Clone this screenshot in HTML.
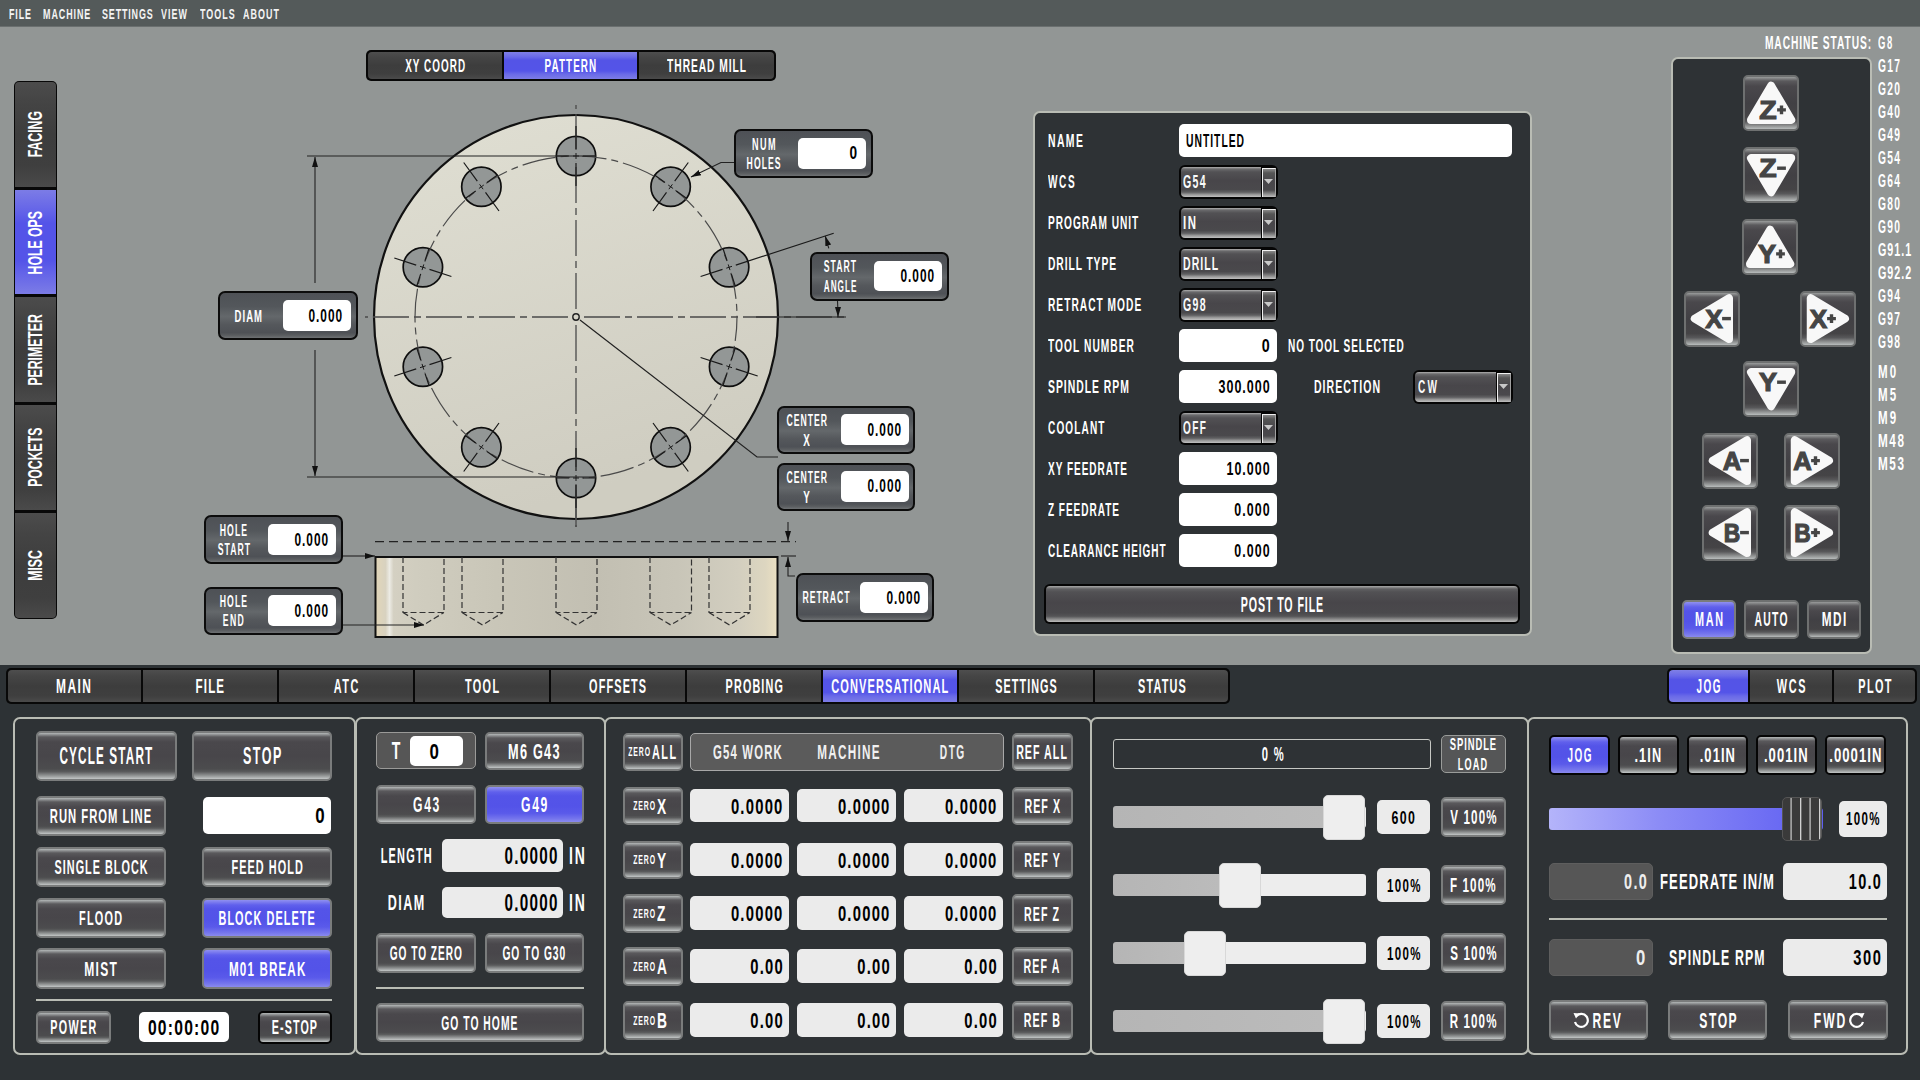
<!DOCTYPE html><html><head><meta charset="utf-8"><style>
*{margin:0;padding:0;box-sizing:border-box}
html,body{width:1920px;height:1080px;overflow:hidden}
body{background:#929695;position:relative;font-family:"Liberation Sans",sans-serif;font-weight:bold}
div{position:absolute}
.tx{white-space:nowrap;line-height:1;height:1em}
.tx span{display:inline-block;-webkit-text-stroke:0px currentColor}
.menu{left:0;top:0;width:1920px;height:27px;background:#545a5a;border-bottom:1px solid #6a6f6f}
.btn{border:2px solid #7a7c7c;border-radius:5px;background:linear-gradient(#b4b8b8 0px,#5a595c 4px,#4a484c 9px,#48464a 50%,#4c4c4e 78%,#5a5b5c 84%,#9a9d9d 94%,#c2c6c6 100%)}
.btnb{border:2px solid #7a7c7c;border-radius:5px;background:linear-gradient(#9090f0 0px,#6060ec 5px,#5454e8 9px,#5353e8 55%,#5a5aea 75%,#7474ec 90%,#8a8aee 100%)}
.tabd{background:linear-gradient(#4e4e4e 0%,#454545 20%,#3d3d3d 50%,#3f3f3f 80%,#4a4a4a 100%)}
.tabb{background:linear-gradient(#8080e6 0%,#6a6ae8 18%,#5454e6 30%,#5454e8 70%,#6a6ae8 82%,#7c7ce6 100%)}
.tabdv{background:linear-gradient(90deg,#4e4e4e 0%,#454545 20%,#3d3d3d 50%,#3f3f3f 80%,#4a4a4a 100%)}
.tabbv{background:linear-gradient(90deg,#8080e6 0%,#6a6ae8 18%,#5454e6 30%,#5454e8 70%,#6a6ae8 82%,#7c7ce6 100%)}
.dim{border:2px solid #0c0c0c;border-radius:7px;background:linear-gradient(#4e5156 0%,#53575b 30%,#64686b 52%,#55585c 70%,#4e5156 88%,#5a5d60 94%,#6e7173 100%)}
.inp{background:#fff;border-radius:5px}
.inpg{background:#ebebeb;border-radius:5px}
.panel{background:#2e3235;border:2px solid #b9bcb4;border-radius:7px}
.dd{border:2px solid #0a0a0a;border-radius:5px;background:linear-gradient(#7a7a7a 0px,#4a4a4a 5px,#3e3e3e 50%,#454545 80%,#6a6a6a 92%,#a8a8a8 100%)}
.ddb{border-left:1px solid #1a1a1a;background:linear-gradient(90deg,#d0d0d0 0px,#8a8a8a 2px,#4e4e4e 4px,#454545 60%,#8a8a8a 90%,#c8c8c8 100%)}
.jog{border:2px solid #6e7070;border-radius:5px;background:linear-gradient(#9a9c9c 0px,#5b5a5d 4px,#4a484c 9px,#414044 50%,#454446 78%,#58585a 86%,#909292 94%,#b8bcbc 100%)}
</style></head><body><div class="menu"></div>
<div class="tx" style="left:9.1px;top:6.0px;font-size:15.26px;color:#f4f4f4;"><span style="transform:scaleX(0.585);letter-spacing:0.098em;transform-origin:0 50%">FILE</span></div>
<div class="tx" style="left:43.1px;top:6.0px;font-size:15.26px;color:#f4f4f4;"><span style="transform:scaleX(0.585);letter-spacing:0.106em;transform-origin:0 50%">MACHINE</span></div>
<div class="tx" style="left:101.6px;top:6.0px;font-size:15.26px;color:#f4f4f4;"><span style="transform:scaleX(0.585);letter-spacing:0.097em;transform-origin:0 50%">SETTINGS</span></div>
<div class="tx" style="left:161.1px;top:6.0px;font-size:15.26px;color:#f4f4f4;"><span style="transform:scaleX(0.585);letter-spacing:0.116em;transform-origin:0 50%">VIEW</span></div>
<div class="tx" style="left:199.6px;top:6.0px;font-size:15.26px;color:#f4f4f4;"><span style="transform:scaleX(0.585);letter-spacing:0.117em;transform-origin:0 50%">TOOLS</span></div>
<div class="tx" style="left:242.6px;top:6.0px;font-size:15.26px;color:#f4f4f4;"><span style="transform:scaleX(0.585);letter-spacing:0.121em;transform-origin:0 50%">ABOUT</span></div>
<div class="" style="left:14.0px;top:81.0px;width:43.0px;height:538.0px;background:#080808;border-radius:5px"></div>
<div class="tabdv" style="left:15.0px;top:82.0px;width:41.0px;height:105.0px;border-radius:4px 4px 0 0;background-image:linear-gradient(#4c4c4c 0%,#444 20%,#3d3d3d 50%,#3f3f3f 80%,#4a4a4a 100%)"></div>
<div class="tx" style="left:-115px;width:300px;text-align:center;top:124.1px;font-size:20.78px;color:#fff;transform:rotate(-90deg);transform-origin:150px 10.44px"><span style="transform:scaleX(0.59)">FACING</span></div>
<div class="tabbv" style="left:15.0px;top:190.0px;width:41.0px;height:104.0px;background-image:linear-gradient(#7c7ce6 0%,#6464e8 20%,#5454e8 32%,#5454e8 68%,#6464e8 80%,#7c7ce6 100%)"></div>
<div class="tx" style="left:-115px;width:300px;text-align:center;top:231.6px;font-size:20.78px;color:#fff;transform:rotate(-90deg);transform-origin:150px 10.44px"><span style="transform:scaleX(0.59)">HOLE OPS</span></div>
<div class="tabdv" style="left:15.0px;top:297.0px;width:41.0px;height:105.0px;background-image:linear-gradient(#4c4c4c 0%,#444 20%,#3d3d3d 50%,#3f3f3f 80%,#4a4a4a 100%)"></div>
<div class="tx" style="left:-115px;width:300px;text-align:center;top:339.1px;font-size:20.78px;color:#fff;transform:rotate(-90deg);transform-origin:150px 10.44px"><span style="transform:scaleX(0.59)">PERIMETER</span></div>
<div class="tabdv" style="left:15.0px;top:405.0px;width:41.0px;height:105.0px;background-image:linear-gradient(#4c4c4c 0%,#444 20%,#3d3d3d 50%,#3f3f3f 80%,#4a4a4a 100%)"></div>
<div class="tx" style="left:-115px;width:300px;text-align:center;top:447.1px;font-size:20.78px;color:#fff;transform:rotate(-90deg);transform-origin:150px 10.44px"><span style="transform:scaleX(0.59)">POCKETS</span></div>
<div class="tabdv" style="left:15.0px;top:513.0px;width:41.0px;height:105.0px;border-radius:0 0 4px 4px;background-image:linear-gradient(#4c4c4c 0%,#444 20%,#3d3d3d 50%,#3f3f3f 80%,#4a4a4a 100%)"></div>
<div class="tx" style="left:-115px;width:300px;text-align:center;top:555.1px;font-size:20.78px;color:#fff;transform:rotate(-90deg);transform-origin:150px 10.44px"><span style="transform:scaleX(0.59)">MISC</span></div>
<div class="" style="left:366.0px;top:50.0px;width:410.0px;height:31.0px;background:#080808;border-radius:5px"></div>
<div class="tabd" style="left:368.0px;top:52.0px;width:134.0px;height:27.0px;border-radius:4px 0 0 4px;"></div>
<div class="tx" style="left:-65.7px;width:1000px;text-align:center;top:57.0px;font-size:18.75px;color:#fff;"><span style="transform:scaleX(0.528);letter-spacing:0.104em;transform-origin:50% 50%;margin-right:-0.104em">XY COORD</span></div>
<div class="tabb" style="left:504.0px;top:52.0px;width:133.0px;height:27.0px;"></div>
<div class="tx" style="left:69.8px;width:1000px;text-align:center;top:57.0px;font-size:18.75px;color:#fff;"><span style="transform:scaleX(0.528);letter-spacing:0.107em;transform-origin:50% 50%;margin-right:-0.107em">PATTERN</span></div>
<div class="tabd" style="left:639.0px;top:52.0px;width:135.0px;height:27.0px;border-radius:0 4px 4px 0;"></div>
<div class="tx" style="left:205.8px;width:1000px;text-align:center;top:57.0px;font-size:18.75px;color:#fff;"><span style="transform:scaleX(0.547);letter-spacing:0.092em;transform-origin:50% 50%;margin-right:-0.092em">THREAD MILL</span></div>
<svg style="position:absolute;left:0;top:0" width="1920" height="665" viewBox="0 0 1920 665"><defs><linearGradient id="disc" x1="0" y1="0" x2="0.3" y2="1"><stop offset="0" stop-color="#e0dfd3"/><stop offset="1" stop-color="#cfcdc1"/></linearGradient><linearGradient id="side" x1="0" y1="0" x2="1" y2="0"><stop offset="0" stop-color="#e2d6b8"/><stop offset="0.025" stop-color="#d8d2c0"/><stop offset="0.035" stop-color="#ecebe4"/><stop offset="0.045" stop-color="#d4d0c2"/><stop offset="0.1" stop-color="#d0cdbf"/><stop offset="0.3" stop-color="#c9c6b8"/><stop offset="0.55" stop-color="#c2bfb2"/><stop offset="0.75" stop-color="#c8c5b8"/><stop offset="0.9" stop-color="#d2cebf"/><stop offset="0.97" stop-color="#ddd6c0"/><stop offset="1" stop-color="#ebe0c2"/></linearGradient><marker id="ar" viewBox="0 0 10 10" refX="10" refY="5" markerWidth="10" markerHeight="10" markerUnits="userSpaceOnUse" orient="auto"><path d="M0,2 L10,5 L0,8 z" fill="#111"/></marker></defs><circle cx="576" cy="317" r="202" fill="url(#disc)" stroke="#111" stroke-width="2.2"/><circle cx="576.00" cy="156.00" r="19.7" fill="#939796" stroke="#0e0e0e" stroke-width="1.7"/><circle cx="670.63" cy="186.75" r="19.7" fill="#939796" stroke="#0e0e0e" stroke-width="1.7"/><circle cx="729.12" cy="267.25" r="19.7" fill="#939796" stroke="#0e0e0e" stroke-width="1.7"/><circle cx="729.12" cy="366.75" r="19.7" fill="#939796" stroke="#0e0e0e" stroke-width="1.7"/><circle cx="670.63" cy="447.25" r="19.7" fill="#939796" stroke="#0e0e0e" stroke-width="1.7"/><circle cx="576.00" cy="478.00" r="19.7" fill="#939796" stroke="#0e0e0e" stroke-width="1.7"/><circle cx="481.37" cy="447.25" r="19.7" fill="#939796" stroke="#0e0e0e" stroke-width="1.7"/><circle cx="422.88" cy="366.75" r="19.7" fill="#939796" stroke="#0e0e0e" stroke-width="1.7"/><circle cx="422.88" cy="267.25" r="19.7" fill="#939796" stroke="#0e0e0e" stroke-width="1.7"/><circle cx="481.37" cy="186.75" r="19.7" fill="#939796" stroke="#0e0e0e" stroke-width="1.7"/><circle cx="576" cy="317" r="161" fill="none" stroke="#4a4a4a" stroke-width="1.2" stroke-dasharray="34 5 7 5" stroke-dashoffset="10"/><line x1="576.0" y1="309.0" x2="576" y2="105" stroke="#4a4a4a" stroke-width="1.3" stroke-dasharray="36 5 7 5"/><line x1="576.0" y1="325.0" x2="576" y2="527" stroke="#4a4a4a" stroke-width="1.3" stroke-dasharray="36 5 7 5"/><line x1="568.0" y1="317.0" x2="365" y2="317" stroke="#4a4a4a" stroke-width="1.3" stroke-dasharray="36 5 7 5"/><line x1="584.0" y1="317.0" x2="846" y2="317" stroke="#4a4a4a" stroke-width="1.3" stroke-dasharray="36 5 7 5"/><line x1="756" y1="317" x2="846" y2="317" stroke="#222" stroke-width="1.2"/><line x1="576" y1="490" x2="576" y2="527" stroke="#4a4a4a" stroke-width="1.3"/><circle cx="576.00" cy="156.00" r="6" fill="#939796"/><path d="M576.0,149.0 L576.0,126.0 M576.0,163.0 L576.0,186.0" stroke="#1a1a1a" stroke-width="1.2"/><path d="M583.0,156.0 L596.0,156.0 M569.0,156.0 L556.0,156.0" stroke="#1a1a1a" stroke-width="1.2"/><path d="M576.0,159.0 L576.0,153.0 M573.0,156.0 L579.0,156.0" stroke="#1a1a1a" stroke-width="1"/><circle cx="670.63" cy="186.75" r="6" fill="#939796"/><path d="M674.7,181.1 L688.3,162.5 M666.5,192.4 L653.0,211.0" stroke="#1a1a1a" stroke-width="1.2"/><path d="M676.3,190.9 L686.8,198.5 M665.0,182.6 L654.5,175.0" stroke="#1a1a1a" stroke-width="1.2"/><path d="M668.9,189.2 L672.4,184.3 M668.2,185.0 L673.1,188.5" stroke="#1a1a1a" stroke-width="1"/><circle cx="729.12" cy="267.25" r="6" fill="#939796"/><path d="M735.8,265.1 L833.7,233.3 M722.5,269.4 L700.6,276.5" stroke="#1a1a1a" stroke-width="1.2"/><path d="M731.3,273.9 L735.3,286.3 M727.0,260.6 L722.9,248.2" stroke="#1a1a1a" stroke-width="1.2"/><path d="M726.3,268.2 L732.0,266.3 M728.2,264.4 L730.0,270.1" stroke="#1a1a1a" stroke-width="1"/><circle cx="729.12" cy="366.75" r="6" fill="#939796"/><path d="M735.8,368.9 L757.7,376.0 M722.5,364.6 L700.6,357.5" stroke="#1a1a1a" stroke-width="1.2"/><path d="M727.0,373.4 L722.9,385.8 M731.3,360.1 L735.3,347.7" stroke="#1a1a1a" stroke-width="1.2"/><path d="M726.3,365.8 L732.0,367.7 M730.0,363.9 L728.2,369.6" stroke="#1a1a1a" stroke-width="1"/><circle cx="670.63" cy="447.25" r="6" fill="#939796"/><path d="M674.7,452.9 L688.3,471.5 M666.5,441.6 L653.0,423.0" stroke="#1a1a1a" stroke-width="1.2"/><path d="M665.0,451.4 L654.5,459.0 M676.3,443.1 L686.8,435.5" stroke="#1a1a1a" stroke-width="1.2"/><path d="M668.9,444.8 L672.4,449.7 M673.1,445.5 L668.2,449.0" stroke="#1a1a1a" stroke-width="1"/><circle cx="576.00" cy="478.00" r="6" fill="#939796"/><path d="M576.0,485.0 L576.0,508.0 M576.0,471.0 L576.0,448.0" stroke="#1a1a1a" stroke-width="1.2"/><path d="M569.0,478.0 L556.0,478.0 M583.0,478.0 L596.0,478.0" stroke="#1a1a1a" stroke-width="1.2"/><path d="M576.0,475.0 L576.0,481.0 M579.0,478.0 L573.0,478.0" stroke="#1a1a1a" stroke-width="1"/><circle cx="481.37" cy="447.25" r="6" fill="#939796"/><path d="M477.3,452.9 L463.7,471.5 M485.5,441.6 L499.0,423.0" stroke="#1a1a1a" stroke-width="1.2"/><path d="M475.7,443.1 L465.2,435.5 M487.0,451.4 L497.5,459.0" stroke="#1a1a1a" stroke-width="1.2"/><path d="M483.1,444.8 L479.6,449.7 M483.8,449.0 L478.9,445.5" stroke="#1a1a1a" stroke-width="1"/><circle cx="422.88" cy="366.75" r="6" fill="#939796"/><path d="M416.2,368.9 L394.3,376.0 M429.5,364.6 L451.4,357.5" stroke="#1a1a1a" stroke-width="1.2"/><path d="M420.7,360.1 L416.7,347.7 M425.0,373.4 L429.1,385.8" stroke="#1a1a1a" stroke-width="1.2"/><path d="M425.7,365.8 L420.0,367.7 M423.8,369.6 L422.0,363.9" stroke="#1a1a1a" stroke-width="1"/><circle cx="422.88" cy="267.25" r="6" fill="#939796"/><path d="M416.2,265.1 L394.3,258.0 M429.5,269.4 L451.4,276.5" stroke="#1a1a1a" stroke-width="1.2"/><path d="M425.0,260.6 L429.1,248.2 M420.7,273.9 L416.7,286.3" stroke="#1a1a1a" stroke-width="1.2"/><path d="M425.7,268.2 L420.0,266.3 M422.0,270.1 L423.8,264.4" stroke="#1a1a1a" stroke-width="1"/><circle cx="481.37" cy="186.75" r="6" fill="#939796"/><path d="M477.3,181.1 L463.7,162.5 M485.5,192.4 L499.0,211.0" stroke="#1a1a1a" stroke-width="1.2"/><path d="M487.0,182.6 L497.5,175.0 M475.7,190.9 L465.2,198.5" stroke="#1a1a1a" stroke-width="1.2"/><path d="M483.1,189.2 L479.6,184.3 M478.9,188.5 L483.8,185.0" stroke="#1a1a1a" stroke-width="1"/><circle cx="576" cy="317" r="3.2" fill="none" stroke="#222" stroke-width="1.4"/><line x1="307" y1="156" x2="596" y2="156" stroke="#222" stroke-width="1.1"/><line x1="307" y1="477" x2="596" y2="477" stroke="#222" stroke-width="1.1"/><line x1="315" y1="283" x2="315" y2="157" stroke="#222" stroke-width="1.1" marker-end="url(#ar)"/><line x1="315" y1="350" x2="315" y2="476" stroke="#222" stroke-width="1.1" marker-end="url(#ar)"/><polyline points="734,162.5 721,162.5 691,177" fill="none" stroke="#222" stroke-width="1.1" marker-end="url(#ar)"/><path d="M828.8,248.3 A262,262 0 0 0 825.2,236.0" fill="none" stroke="#222" stroke-width="1.1" marker-end="url(#ar)"/><path d="M837.5,301.0 A262,262 0 0 1 838.0,317.0" fill="none" stroke="#222" stroke-width="1.1" marker-end="url(#ar)"/><polyline points="580,320 757,457 778,457" fill="none" stroke="#222" stroke-width="1.2"/><rect x="375.5" y="557" width="402" height="80" fill="url(#side)" stroke="#111" stroke-width="2"/><line x1="375" y1="541.7" x2="796" y2="541.7" stroke="#222" stroke-width="1.3" stroke-dasharray="9 5"/><path d="M403,557 V612.5 H444 V557 M403,612.5 L423.5,625 L444,612.5" fill="none" stroke="#333" stroke-width="1.2" stroke-dasharray="6 3"/><path d="M462,557 V612.5 H503 V557 M462,612.5 L482.5,625 L503,612.5" fill="none" stroke="#333" stroke-width="1.2" stroke-dasharray="6 3"/><path d="M556,557 V612.5 H597 V557 M556,612.5 L576.5,625 L597,612.5" fill="none" stroke="#333" stroke-width="1.2" stroke-dasharray="6 3"/><path d="M650,557 V612.5 H691.5 V557 M650,612.5 L670.75,625 L691.5,612.5" fill="none" stroke="#333" stroke-width="1.2" stroke-dasharray="6 3"/><path d="M709,557 V612.5 H750 V557 M709,612.5 L729.5,625 L750,612.5" fill="none" stroke="#333" stroke-width="1.2" stroke-dasharray="6 3"/><line x1="343" y1="556" x2="375" y2="556" stroke="#222" stroke-width="1.1" marker-end="url(#ar)"/><line x1="343" y1="625" x2="424" y2="625" stroke="#222" stroke-width="1.1" marker-end="url(#ar)"/><line x1="788" y1="522" x2="788" y2="541" stroke="#222" stroke-width="1.1" marker-end="url(#ar)"/><line x1="781" y1="556" x2="796" y2="556" stroke="#222" stroke-width="1.1"/><polyline points="795,576 788,576 788,557" fill="none" stroke="#222" stroke-width="1.1" marker-end="url(#ar)"/></svg>
<div class="dim" style="left:218.0px;top:291.0px;width:139.5px;height:49.0px;"></div>
<div class="inp" style="left:283.0px;top:300.0px;width:68.0px;height:31.0px;"></div>
<div class="tx" style="left:-251.7px;width:1000px;text-align:center;top:308.0px;font-size:16.42px;color:#fff;"><span style="transform:scaleX(0.580);letter-spacing:0.116em;transform-origin:50% 50%;margin-right:-0.116em">DIAM</span></div>
<div class="tx" style="left:-657.9px;width:1000px;text-align:right;top:307.0px;font-size:18.17px;color:#000;"><span style="transform:scaleX(0.653);letter-spacing:0.085em;transform-origin:100% 50%;margin-right:-0.085em">0.000</span></div>
<div class="dim" style="left:733.8px;top:129.0px;width:138.8px;height:49.0px;"></div>
<div class="inp" style="left:798.0px;top:138.0px;width:68.0px;height:31.0px;"></div>
<div class="tx" style="left:263.3px;width:1000px;text-align:center;top:136.0px;font-size:16.42px;color:#fff;"><span style="transform:scaleX(0.554);letter-spacing:0.155em;transform-origin:50% 50%;margin-right:-0.155em">NUM</span></div>
<div class="tx" style="left:263.3px;width:1000px;text-align:center;top:155.0px;font-size:16.42px;color:#fff;"><span style="transform:scaleX(0.528);letter-spacing:0.117em;transform-origin:50% 50%;margin-right:-0.117em">HOLES</span></div>
<div class="tx" style="left:-142.7px;width:1000px;text-align:right;top:144.0px;font-size:18.17px;color:#000;"><span style="transform:scaleX(0.750);letter-spacing:0.000em;transform-origin:100% 50%;margin-right:0.000em">0</span></div>
<div class="dim" style="left:809.5px;top:252.0px;width:139.5px;height:48.5px;"></div>
<div class="inp" style="left:874.0px;top:261.0px;width:68.0px;height:30.0px;"></div>
<div class="tx" style="left:339.3px;width:1000px;text-align:center;top:258.0px;font-size:16.42px;color:#fff;"><span style="transform:scaleX(0.528);letter-spacing:0.114em;transform-origin:50% 50%;margin-right:-0.114em">START</span></div>
<div class="tx" style="left:339.3px;width:1000px;text-align:center;top:278.0px;font-size:16.42px;color:#fff;"><span style="transform:scaleX(0.501);letter-spacing:0.119em;transform-origin:50% 50%;margin-right:-0.119em">ANGLE</span></div>
<div class="tx" style="left:-66.7px;width:1000px;text-align:right;top:267.0px;font-size:18.17px;color:#000;"><span style="transform:scaleX(0.653);letter-spacing:0.085em;transform-origin:100% 50%;margin-right:-0.085em">0.000</span></div>
<div class="dim" style="left:776.7px;top:406.0px;width:138.8px;height:47.8px;"></div>
<div class="inp" style="left:841.0px;top:414.4px;width:68.0px;height:30.6px;"></div>
<div class="tx" style="left:306.0px;width:1000px;text-align:center;top:412.0px;font-size:16.42px;color:#fff;"><span style="transform:scaleX(0.528);letter-spacing:0.112em;transform-origin:50% 50%;margin-right:-0.112em">CENTER</span></div>
<div class="tx" style="left:306.0px;width:1000px;text-align:center;top:432.0px;font-size:16.42px;color:#fff;"><span style="transform:scaleX(0.600);letter-spacing:0.000em;transform-origin:50% 50%;margin-right:0.000em">X</span></div>
<div class="tx" style="left:-99.7px;width:1000px;text-align:right;top:421.0px;font-size:18.17px;color:#000;"><span style="transform:scaleX(0.653);letter-spacing:0.085em;transform-origin:100% 50%;margin-right:-0.085em">0.000</span></div>
<div class="dim" style="left:776.7px;top:463.0px;width:138.8px;height:48.0px;"></div>
<div class="inp" style="left:841.0px;top:471.0px;width:68.0px;height:30.8px;"></div>
<div class="tx" style="left:306.0px;width:1000px;text-align:center;top:469.0px;font-size:16.42px;color:#fff;"><span style="transform:scaleX(0.528);letter-spacing:0.112em;transform-origin:50% 50%;margin-right:-0.112em">CENTER</span></div>
<div class="tx" style="left:306.0px;width:1000px;text-align:center;top:489.0px;font-size:16.42px;color:#fff;"><span style="transform:scaleX(0.600);letter-spacing:0.000em;transform-origin:50% 50%;margin-right:0.000em">Y</span></div>
<div class="tx" style="left:-99.7px;width:1000px;text-align:right;top:477.0px;font-size:18.17px;color:#000;"><span style="transform:scaleX(0.653);letter-spacing:0.085em;transform-origin:100% 50%;margin-right:-0.085em">0.000</span></div>
<div class="dim" style="left:203.5px;top:515.0px;width:139.2px;height:49.0px;"></div>
<div class="inp" style="left:268.0px;top:524.0px;width:67.8px;height:31.0px;"></div>
<div class="tx" style="left:-266.9px;width:1000px;text-align:center;top:522.0px;font-size:16.42px;color:#fff;"><span style="transform:scaleX(0.528);letter-spacing:0.126em;transform-origin:50% 50%;margin-right:-0.126em">HOLE</span></div>
<div class="tx" style="left:-266.9px;width:1000px;text-align:center;top:541.0px;font-size:16.42px;color:#fff;"><span style="transform:scaleX(0.528);letter-spacing:0.114em;transform-origin:50% 50%;margin-right:-0.114em">START</span></div>
<div class="tx" style="left:-672.7px;width:1000px;text-align:right;top:531.0px;font-size:18.17px;color:#000;"><span style="transform:scaleX(0.653);letter-spacing:0.085em;transform-origin:100% 50%;margin-right:-0.085em">0.000</span></div>
<div class="dim" style="left:203.5px;top:586.5px;width:139.2px;height:48.9px;"></div>
<div class="inp" style="left:268.0px;top:595.0px;width:67.8px;height:31.0px;"></div>
<div class="tx" style="left:-266.9px;width:1000px;text-align:center;top:593.0px;font-size:16.42px;color:#fff;"><span style="transform:scaleX(0.528);letter-spacing:0.126em;transform-origin:50% 50%;margin-right:-0.126em">HOLE</span></div>
<div class="tx" style="left:-266.9px;width:1000px;text-align:center;top:612.0px;font-size:16.42px;color:#fff;"><span style="transform:scaleX(0.528);letter-spacing:0.144em;transform-origin:50% 50%;margin-right:-0.144em">END</span></div>
<div class="tx" style="left:-672.7px;width:1000px;text-align:right;top:602.0px;font-size:18.17px;color:#000;"><span style="transform:scaleX(0.653);letter-spacing:0.085em;transform-origin:100% 50%;margin-right:-0.085em">0.000</span></div>
<div class="dim" style="left:796.0px;top:573.0px;width:138.0px;height:49.0px;"></div>
<div class="inp" style="left:860.0px;top:582.0px;width:68.0px;height:31.0px;"></div>
<div class="tx" style="left:325.3px;width:1000px;text-align:center;top:589.0px;font-size:16.42px;color:#fff;"><span style="transform:scaleX(0.528);letter-spacing:0.109em;transform-origin:50% 50%;margin-right:-0.109em">RETRACT</span></div>
<div class="tx" style="left:-80.7px;width:1000px;text-align:right;top:589.0px;font-size:18.17px;color:#000;"><span style="transform:scaleX(0.653);letter-spacing:0.085em;transform-origin:100% 50%;margin-right:-0.085em">0.000</span></div>
<div class="panel" style="left:1032.5px;top:111.0px;width:499.0px;height:525.0px;border-width:2px"></div>
<div class="tx" style="left:1048.1px;top:131.0px;font-size:19.04px;color:#fff;"><span style="transform:scaleX(0.548);letter-spacing:0.134em;transform-origin:0 50%">NAME</span></div>
<div class="inp" style="left:1179.0px;top:124.3px;width:333.0px;height:32.6px;"></div>
<div class="tx" style="left:1185.6px;top:131.0px;font-size:19.04px;color:#000;"><span style="transform:scaleX(0.543);letter-spacing:0.096em;transform-origin:0 50%">UNTITLED</span></div>
<div class="tx" style="left:1048.1px;top:172.0px;font-size:19.04px;color:#fff;"><span style="transform:scaleX(0.528);letter-spacing:0.159em;transform-origin:0 50%">WCS</span></div>
<div class="" style="left:1178.5px;top:164.6px;width:99.0px;height:34.0px;background:#050505;border-radius:6px"></div>
<div class="" style="left:1180.5px;top:166.6px;width:80.0px;height:30.0px;border-radius:4px 0 0 4px;background:linear-gradient(#b0b0b0 0px,#6a6a6c 2px,#525154 5px,#48464a 45%,#4a494c 75%,#606062 84%,#9a9a9a 92%,#c0c0c0 100%)"></div>
<div class="" style="left:1261.5px;top:167.6px;width:14.0px;height:29.0px;border-left:1px solid #f0f0f0;border-right:1px solid #a0a0a0;border-top:1px solid #f0f0f0;background:linear-gradient(#8a8a8a 0px,#555 4px,#48464a 45%,#4a494c 75%,#909090 90%,#c0c0c0 100%)"></div>
<svg style="position:absolute;left:1264.0px;top:179.1px" width="9" height="5"><path d="M0,0 H9 L4.5,5 z" fill="#c8c8c8"/></svg>
<div class="tx" style="left:1183.1px;top:172.0px;font-size:19.04px;color:#fafafa;"><span style="transform:scaleX(0.555);letter-spacing:0.129em;transform-origin:0 50%">G54</span></div>
<div class="tx" style="left:1048.1px;top:213.0px;font-size:19.04px;color:#fff;"><span style="transform:scaleX(0.533);letter-spacing:0.097em;transform-origin:0 50%">PROGRAM UNIT</span></div>
<div class="" style="left:1178.5px;top:205.6px;width:99.0px;height:34.0px;background:#050505;border-radius:6px"></div>
<div class="" style="left:1180.5px;top:207.6px;width:80.0px;height:30.0px;border-radius:4px 0 0 4px;background:linear-gradient(#b0b0b0 0px,#6a6a6c 2px,#525154 5px,#48464a 45%,#4a494c 75%,#606062 84%,#9a9a9a 92%,#c0c0c0 100%)"></div>
<div class="" style="left:1261.5px;top:208.6px;width:14.0px;height:29.0px;border-left:1px solid #f0f0f0;border-right:1px solid #a0a0a0;border-top:1px solid #f0f0f0;background:linear-gradient(#8a8a8a 0px,#555 4px,#48464a 45%,#4a494c 75%,#909090 90%,#c0c0c0 100%)"></div>
<svg style="position:absolute;left:1264.0px;top:220.1px" width="9" height="5"><path d="M0,0 H9 L4.5,5 z" fill="#c8c8c8"/></svg>
<div class="tx" style="left:1183.1px;top:213.0px;font-size:19.04px;color:#fafafa;"><span style="transform:scaleX(0.601);letter-spacing:0.136em;transform-origin:0 50%">IN</span></div>
<div class="tx" style="left:1048.1px;top:254.0px;font-size:19.04px;color:#fff;"><span style="transform:scaleX(0.541);letter-spacing:0.088em;transform-origin:0 50%">DRILL TYPE</span></div>
<div class="" style="left:1178.5px;top:246.6px;width:99.0px;height:34.0px;background:#050505;border-radius:6px"></div>
<div class="" style="left:1180.5px;top:248.6px;width:80.0px;height:30.0px;border-radius:4px 0 0 4px;background:linear-gradient(#b0b0b0 0px,#6a6a6c 2px,#525154 5px,#48464a 45%,#4a494c 75%,#606062 84%,#9a9a9a 92%,#c0c0c0 100%)"></div>
<div class="" style="left:1261.5px;top:249.6px;width:14.0px;height:29.0px;border-left:1px solid #f0f0f0;border-right:1px solid #a0a0a0;border-top:1px solid #f0f0f0;background:linear-gradient(#8a8a8a 0px,#555 4px,#48464a 45%,#4a494c 75%,#909090 90%,#c0c0c0 100%)"></div>
<svg style="position:absolute;left:1264.0px;top:261.1px" width="9" height="5"><path d="M0,0 H9 L4.5,5 z" fill="#c8c8c8"/></svg>
<div class="tx" style="left:1183.1px;top:254.0px;font-size:19.04px;color:#fafafa;"><span style="transform:scaleX(0.553);letter-spacing:0.100em;transform-origin:0 50%">DRILL</span></div>
<div class="tx" style="left:1048.1px;top:295.0px;font-size:19.04px;color:#fff;"><span style="transform:scaleX(0.535);letter-spacing:0.100em;transform-origin:0 50%">RETRACT MODE</span></div>
<div class="" style="left:1178.5px;top:287.6px;width:99.0px;height:34.0px;background:#050505;border-radius:6px"></div>
<div class="" style="left:1180.5px;top:289.6px;width:80.0px;height:30.0px;border-radius:4px 0 0 4px;background:linear-gradient(#b0b0b0 0px,#6a6a6c 2px,#525154 5px,#48464a 45%,#4a494c 75%,#606062 84%,#9a9a9a 92%,#c0c0c0 100%)"></div>
<div class="" style="left:1261.5px;top:290.6px;width:14.0px;height:29.0px;border-left:1px solid #f0f0f0;border-right:1px solid #a0a0a0;border-top:1px solid #f0f0f0;background:linear-gradient(#8a8a8a 0px,#555 4px,#48464a 45%,#4a494c 75%,#909090 90%,#c0c0c0 100%)"></div>
<svg style="position:absolute;left:1264.0px;top:302.1px" width="9" height="5"><path d="M0,0 H9 L4.5,5 z" fill="#c8c8c8"/></svg>
<div class="tx" style="left:1183.1px;top:295.0px;font-size:19.04px;color:#fafafa;"><span style="transform:scaleX(0.555);letter-spacing:0.129em;transform-origin:0 50%">G98</span></div>
<div class="tx" style="left:1048.1px;top:336.0px;font-size:19.04px;color:#fff;"><span style="transform:scaleX(0.536);letter-spacing:0.102em;transform-origin:0 50%">TOOL NUMBER</span></div>
<div class="inp" style="left:1179.0px;top:329.3px;width:98.0px;height:32.6px;"></div>
<div class="tx" style="left:269.3px;width:1000px;text-align:right;top:336.0px;font-size:19.04px;color:#000;"><span style="transform:scaleX(0.750);letter-spacing:0.000em;transform-origin:100% 50%;margin-right:0.000em">0</span></div>
<div class="tx" style="left:1048.1px;top:377.0px;font-size:19.04px;color:#fff;"><span style="transform:scaleX(0.547);letter-spacing:0.093em;transform-origin:0 50%">SPINDLE RPM</span></div>
<div class="inp" style="left:1179.0px;top:370.3px;width:98.0px;height:32.6px;"></div>
<div class="tx" style="left:269.3px;width:1000px;text-align:right;top:377.0px;font-size:19.04px;color:#000;"><span style="transform:scaleX(0.655);letter-spacing:0.082em;transform-origin:100% 50%;margin-right:-0.082em">300.000</span></div>
<div class="tx" style="left:1048.1px;top:418.0px;font-size:19.04px;color:#fff;"><span style="transform:scaleX(0.528);letter-spacing:0.112em;transform-origin:0 50%">COOLANT</span></div>
<div class="" style="left:1178.5px;top:410.6px;width:99.0px;height:34.0px;background:#050505;border-radius:6px"></div>
<div class="" style="left:1180.5px;top:412.6px;width:80.0px;height:30.0px;border-radius:4px 0 0 4px;background:linear-gradient(#b0b0b0 0px,#6a6a6c 2px,#525154 5px,#48464a 45%,#4a494c 75%,#606062 84%,#9a9a9a 92%,#c0c0c0 100%)"></div>
<div class="" style="left:1261.5px;top:413.6px;width:14.0px;height:29.0px;border-left:1px solid #f0f0f0;border-right:1px solid #a0a0a0;border-top:1px solid #f0f0f0;background:linear-gradient(#8a8a8a 0px,#555 4px,#48464a 45%,#4a494c 75%,#909090 90%,#c0c0c0 100%)"></div>
<svg style="position:absolute;left:1264.0px;top:425.1px" width="9" height="5"><path d="M0,0 H9 L4.5,5 z" fill="#c8c8c8"/></svg>
<div class="tx" style="left:1183.1px;top:418.0px;font-size:19.04px;color:#fafafa;"><span style="transform:scaleX(0.528);letter-spacing:0.136em;transform-origin:0 50%">OFF</span></div>
<div class="tx" style="left:1048.1px;top:459.0px;font-size:19.04px;color:#fff;"><span style="transform:scaleX(0.528);letter-spacing:0.095em;transform-origin:0 50%">XY FEEDRATE</span></div>
<div class="inp" style="left:1179.0px;top:452.3px;width:98.0px;height:32.6px;"></div>
<div class="tx" style="left:269.3px;width:1000px;text-align:right;top:459.0px;font-size:19.04px;color:#000;"><span style="transform:scaleX(0.654);letter-spacing:0.083em;transform-origin:100% 50%;margin-right:-0.083em">10.000</span></div>
<div class="tx" style="left:1048.1px;top:500.0px;font-size:19.04px;color:#fff;"><span style="transform:scaleX(0.528);letter-spacing:0.095em;transform-origin:0 50%">Z FEEDRATE</span></div>
<div class="inp" style="left:1179.0px;top:493.3px;width:98.0px;height:32.6px;"></div>
<div class="tx" style="left:269.3px;width:1000px;text-align:right;top:500.0px;font-size:19.04px;color:#000;"><span style="transform:scaleX(0.653);letter-spacing:0.085em;transform-origin:100% 50%;margin-right:-0.085em">0.000</span></div>
<div class="tx" style="left:1048.1px;top:541.0px;font-size:19.04px;color:#fff;"><span style="transform:scaleX(0.526);letter-spacing:0.094em;transform-origin:0 50%">CLEARANCE HEIGHT</span></div>
<div class="inp" style="left:1179.0px;top:534.3px;width:98.0px;height:32.6px;"></div>
<div class="tx" style="left:269.3px;width:1000px;text-align:right;top:541.0px;font-size:19.04px;color:#000;"><span style="transform:scaleX(0.653);letter-spacing:0.085em;transform-origin:100% 50%;margin-right:-0.085em">0.000</span></div>
<div class="tx" style="left:1288.1px;top:336.0px;font-size:19.04px;color:#fff;"><span style="transform:scaleX(0.528);letter-spacing:0.092em;transform-origin:0 50%">NO TOOL SELECTED</span></div>
<div class="tx" style="left:1314.0px;top:377.0px;font-size:19.04px;color:#fff;"><span style="transform:scaleX(0.555);letter-spacing:0.094em;transform-origin:0 50%">DIRECTION</span></div>
<div class="" style="left:1413.0px;top:369.6px;width:99.5px;height:34.0px;background:#050505;border-radius:6px"></div>
<div class="" style="left:1415.0px;top:371.6px;width:80.5px;height:30.0px;border-radius:4px 0 0 4px;background:linear-gradient(#b0b0b0 0px,#6a6a6c 2px,#525154 5px,#48464a 45%,#4a494c 75%,#606062 84%,#9a9a9a 92%,#c0c0c0 100%)"></div>
<div class="" style="left:1496.5px;top:372.6px;width:14.0px;height:29.0px;border-left:1px solid #f0f0f0;border-right:1px solid #a0a0a0;border-top:1px solid #f0f0f0;background:linear-gradient(#8a8a8a 0px,#555 4px,#48464a 45%,#4a494c 75%,#909090 90%,#c0c0c0 100%)"></div>
<svg style="position:absolute;left:1499.0px;top:384.1px" width="9" height="5"><path d="M0,0 H9 L4.5,5 z" fill="#c8c8c8"/></svg>
<div class="tx" style="left:1417.6px;top:377.0px;font-size:19.04px;color:#fafafa;"><span style="transform:scaleX(0.528);letter-spacing:0.227em;transform-origin:0 50%">CW</span></div>
<div class="" style="left:1044.0px;top:583.5px;width:476.0px;height:40.5px;background:#050505;border-radius:6px"></div>
<div class="" style="left:1046.0px;top:585.5px;width:472.0px;height:36.5px;border-radius:4px;background:linear-gradient(#a8a8a8 0px,#606062 3px,#525154 6px,#48464a 45%,#4a494c 75%,#555557 84%,#8a8a8a 92%,#bcbcbc 100%)"></div>
<div class="tx" style="left:781.3px;width:1000px;text-align:center;top:594.0px;font-size:21.80px;color:#fff;"><span style="transform:scaleX(0.488);letter-spacing:0.085em;transform-origin:50% 50%;margin-right:-0.085em">POST TO FILE</span></div>
<div class="tx" style="left:870.1px;width:1000px;text-align:right;top:34.0px;font-size:18.53px;color:#fff;"><span style="transform:scaleX(0.552);letter-spacing:0.090em;transform-origin:100% 50%;margin-right:-0.090em">MACHINE STATUS:</span></div>
<div class="tx" style="left:1878.1px;top:34.0px;font-size:18.53px;color:#fff;"><span style="transform:scaleX(0.511);letter-spacing:0.182em;transform-origin:0 50%">G8</span></div>
<div class="tx" style="left:1878.1px;top:57.0px;font-size:18.53px;color:#fff;"><span style="transform:scaleX(0.555);letter-spacing:0.129em;transform-origin:0 50%">G17</span></div>
<div class="tx" style="left:1878.1px;top:80.0px;font-size:18.53px;color:#fff;"><span style="transform:scaleX(0.555);letter-spacing:0.129em;transform-origin:0 50%">G20</span></div>
<div class="tx" style="left:1878.1px;top:103.0px;font-size:18.53px;color:#fff;"><span style="transform:scaleX(0.555);letter-spacing:0.129em;transform-origin:0 50%">G40</span></div>
<div class="tx" style="left:1878.1px;top:126.0px;font-size:18.53px;color:#fff;"><span style="transform:scaleX(0.555);letter-spacing:0.129em;transform-origin:0 50%">G49</span></div>
<div class="tx" style="left:1878.1px;top:149.0px;font-size:18.53px;color:#fff;"><span style="transform:scaleX(0.555);letter-spacing:0.129em;transform-origin:0 50%">G54</span></div>
<div class="tx" style="left:1878.1px;top:172.0px;font-size:18.53px;color:#fff;"><span style="transform:scaleX(0.555);letter-spacing:0.129em;transform-origin:0 50%">G64</span></div>
<div class="tx" style="left:1878.1px;top:195.0px;font-size:18.53px;color:#fff;"><span style="transform:scaleX(0.555);letter-spacing:0.129em;transform-origin:0 50%">G80</span></div>
<div class="tx" style="left:1878.1px;top:218.0px;font-size:18.53px;color:#fff;"><span style="transform:scaleX(0.555);letter-spacing:0.129em;transform-origin:0 50%">G90</span></div>
<div class="tx" style="left:1878.1px;top:241.0px;font-size:18.53px;color:#fff;"><span style="transform:scaleX(0.581);letter-spacing:0.093em;transform-origin:0 50%">G91.1</span></div>
<div class="tx" style="left:1878.1px;top:264.0px;font-size:18.53px;color:#fff;"><span style="transform:scaleX(0.581);letter-spacing:0.093em;transform-origin:0 50%">G92.2</span></div>
<div class="tx" style="left:1878.1px;top:287.0px;font-size:18.53px;color:#fff;"><span style="transform:scaleX(0.555);letter-spacing:0.129em;transform-origin:0 50%">G94</span></div>
<div class="tx" style="left:1878.1px;top:310.0px;font-size:18.53px;color:#fff;"><span style="transform:scaleX(0.555);letter-spacing:0.129em;transform-origin:0 50%">G97</span></div>
<div class="tx" style="left:1878.1px;top:333.0px;font-size:18.53px;color:#fff;"><span style="transform:scaleX(0.555);letter-spacing:0.129em;transform-origin:0 50%">G98</span></div>
<div class="tx" style="left:1878.1px;top:363.0px;font-size:18.53px;color:#fff;"><span style="transform:scaleX(0.623);letter-spacing:0.189em;transform-origin:0 50%">M0</span></div>
<div class="tx" style="left:1878.1px;top:386.0px;font-size:18.53px;color:#fff;"><span style="transform:scaleX(0.623);letter-spacing:0.189em;transform-origin:0 50%">M5</span></div>
<div class="tx" style="left:1878.1px;top:409.0px;font-size:18.53px;color:#fff;"><span style="transform:scaleX(0.623);letter-spacing:0.189em;transform-origin:0 50%">M9</span></div>
<div class="tx" style="left:1878.1px;top:432.0px;font-size:18.53px;color:#fff;"><span style="transform:scaleX(0.634);letter-spacing:0.133em;transform-origin:0 50%">M48</span></div>
<div class="tx" style="left:1878.1px;top:455.0px;font-size:18.53px;color:#fff;"><span style="transform:scaleX(0.634);letter-spacing:0.133em;transform-origin:0 50%">M53</span></div>
<div class="panel" style="left:1671.0px;top:57.0px;width:200.5px;height:597.0px;"></div>
<div class="jog" style="left:1743.0px;top:75.0px;width:56.0px;height:56.0px;"></div>
<svg style="position:absolute;left:1743px;top:75px" width="56" height="56"><polygon points="28.1,10.7 48.2,44.9 8,44.9" fill="#f8f8f8" stroke="#f8f8f8" stroke-width="8" stroke-linejoin="round"/><text x="16.20" y="43.80" textLength="17.4" lengthAdjust="spacingAndGlyphs" font-family="Liberation Sans" font-weight="bold" font-size="25.9" fill="#454545" stroke="#454545" stroke-width="1.2">Z</text><path d="M34.1,34.9h8.8M38.5,30.5v8.8" stroke="#454545" stroke-width="3.4"/></svg>
<div class="jog" style="left:1743.0px;top:147.0px;width:56.0px;height:56.0px;"></div>
<svg style="position:absolute;left:1743px;top:147px" width="56" height="56"><polygon points="8,11.1 48.2,11.1 28.1,45.3" fill="#f8f8f8" stroke="#f8f8f8" stroke-width="8" stroke-linejoin="round"/><text x="16.20" y="30.10" textLength="17.4" lengthAdjust="spacingAndGlyphs" font-family="Liberation Sans" font-weight="bold" font-size="25.9" fill="#454545" stroke="#454545" stroke-width="1.2">Z</text><path d="M34.1,21.2h8.8" stroke="#454545" stroke-width="3.4"/></svg>
<div class="jog" style="left:1742.0px;top:219.0px;width:56.0px;height:56.0px;"></div>
<svg style="position:absolute;left:1742px;top:219px" width="56" height="56"><polygon points="28.1,10.7 48.2,44.9 8,44.9" fill="#f8f8f8" stroke="#f8f8f8" stroke-width="8" stroke-linejoin="round"/><text x="15.90" y="43.80" textLength="18.0" lengthAdjust="spacingAndGlyphs" font-family="Liberation Sans" font-weight="bold" font-size="25.9" fill="#454545" stroke="#454545" stroke-width="1.2">Y</text><path d="M34.1,34.9h8.8M38.5,30.5v8.8" stroke="#454545" stroke-width="3.4"/></svg>
<div class="jog" style="left:1684.0px;top:290.5px;width:56.0px;height:56.0px;"></div>
<svg style="position:absolute;left:1684px;top:290.5px" width="56" height="56"><polygon points="10.75,27.6 45,7.25 45,48" fill="#f8f8f8" stroke="#f8f8f8" stroke-width="8" stroke-linejoin="round"/><text x="21.30" y="36.50" textLength="17.4" lengthAdjust="spacingAndGlyphs" font-family="Liberation Sans" font-weight="bold" font-size="25.9" fill="#454545" stroke="#454545" stroke-width="1.2">X</text><path d="M38.1,27.6h8.8" stroke="#454545" stroke-width="3.4"/></svg>
<div class="jog" style="left:1800.0px;top:290.5px;width:56.0px;height:56.0px;"></div>
<svg style="position:absolute;left:1800px;top:290.5px" width="56" height="56"><polygon points="10.75,7.25 10.75,48 45,27.6" fill="#f8f8f8" stroke="#f8f8f8" stroke-width="8" stroke-linejoin="round"/><text x="9.80" y="36.50" textLength="17.4" lengthAdjust="spacingAndGlyphs" font-family="Liberation Sans" font-weight="bold" font-size="25.9" fill="#454545" stroke="#454545" stroke-width="1.2">X</text><path d="M27.1,27.6h8.8M31.5,23.200000000000003v8.8" stroke="#454545" stroke-width="3.4"/></svg>
<div class="jog" style="left:1742.5px;top:361.0px;width:56.0px;height:56.0px;"></div>
<svg style="position:absolute;left:1742.5px;top:361px" width="56" height="56"><polygon points="8,11.1 48.2,11.1 28.1,45.3" fill="#f8f8f8" stroke="#f8f8f8" stroke-width="8" stroke-linejoin="round"/><text x="15.90" y="30.10" textLength="18.0" lengthAdjust="spacingAndGlyphs" font-family="Liberation Sans" font-weight="bold" font-size="25.9" fill="#454545" stroke="#454545" stroke-width="1.2">Y</text><path d="M34.1,21.2h8.8" stroke="#454545" stroke-width="3.4"/></svg>
<div class="jog" style="left:1702.0px;top:433.0px;width:56.0px;height:56.0px;"></div>
<svg style="position:absolute;left:1702px;top:433px" width="56" height="56"><polygon points="10.75,27.6 45,7.25 45,48" fill="#f8f8f8" stroke="#f8f8f8" stroke-width="8" stroke-linejoin="round"/><text x="20.75" y="36.50" textLength="18.5" lengthAdjust="spacingAndGlyphs" font-family="Liberation Sans" font-weight="bold" font-size="25.9" fill="#454545" stroke="#454545" stroke-width="1.2">A</text><path d="M38.1,27.6h8.8" stroke="#454545" stroke-width="3.4"/></svg>
<div class="jog" style="left:1784.0px;top:433.0px;width:56.0px;height:56.0px;"></div>
<svg style="position:absolute;left:1784px;top:433px" width="56" height="56"><polygon points="10.75,7.25 10.75,48 45,27.6" fill="#f8f8f8" stroke="#f8f8f8" stroke-width="8" stroke-linejoin="round"/><text x="9.25" y="36.50" textLength="18.5" lengthAdjust="spacingAndGlyphs" font-family="Liberation Sans" font-weight="bold" font-size="25.9" fill="#454545" stroke="#454545" stroke-width="1.2">A</text><path d="M27.1,27.6h8.8M31.5,23.200000000000003v8.8" stroke="#454545" stroke-width="3.4"/></svg>
<div class="jog" style="left:1702.0px;top:505.0px;width:56.0px;height:56.0px;"></div>
<svg style="position:absolute;left:1702px;top:505px" width="56" height="56"><polygon points="10.75,27.6 45,7.25 45,48" fill="#f8f8f8" stroke="#f8f8f8" stroke-width="8" stroke-linejoin="round"/><text x="21.75" y="36.50" textLength="16.5" lengthAdjust="spacingAndGlyphs" font-family="Liberation Sans" font-weight="bold" font-size="25.9" fill="#454545" stroke="#454545" stroke-width="1.2">B</text><path d="M38.1,27.6h8.8" stroke="#454545" stroke-width="3.4"/></svg>
<div class="jog" style="left:1784.0px;top:505.0px;width:56.0px;height:56.0px;"></div>
<svg style="position:absolute;left:1784px;top:505px" width="56" height="56"><polygon points="10.75,7.25 10.75,48 45,27.6" fill="#f8f8f8" stroke="#f8f8f8" stroke-width="8" stroke-linejoin="round"/><text x="10.25" y="36.50" textLength="16.5" lengthAdjust="spacingAndGlyphs" font-family="Liberation Sans" font-weight="bold" font-size="25.9" fill="#454545" stroke="#454545" stroke-width="1.2">B</text><path d="M27.1,27.6h8.8M31.5,23.200000000000003v8.8" stroke="#454545" stroke-width="3.4"/></svg>
<div class="btnb" style="left:1682.0px;top:600.0px;width:54.0px;height:38.5px;"></div>
<div class="tx" style="left:1208.3px;width:1000px;text-align:center;top:610.0px;font-size:19.62px;color:#fff;"><span style="transform:scaleX(0.554);letter-spacing:0.155em;transform-origin:50% 50%;margin-right:-0.155em">MAN</span></div>
<div class="jog" style="left:1744.0px;top:600.0px;width:55.0px;height:38.5px;"></div>
<div class="tx" style="left:1270.8px;width:1000px;text-align:center;top:610.0px;font-size:19.62px;color:#fff;"><span style="transform:scaleX(0.528);letter-spacing:0.129em;transform-origin:50% 50%;margin-right:-0.129em">AUTO</span></div>
<div class="jog" style="left:1807.0px;top:600.0px;width:54.0px;height:38.5px;"></div>
<div class="tx" style="left:1333.3px;width:1000px;text-align:center;top:610.0px;font-size:19.62px;color:#fff;"><span style="transform:scaleX(0.600);letter-spacing:0.125em;transform-origin:50% 50%;margin-right:-0.125em">MDI</span></div>
<div class="" style="left:0.0px;top:665.0px;width:1920.0px;height:415.0px;background:#2d3235"></div>
<div class="" style="left:6.0px;top:668.0px;width:1224.0px;height:36.0px;background:#080808;border-radius:5px"></div>
<div class="tabd" style="left:8.0px;top:670.0px;width:133.0px;height:32.0px;border-radius:4px 0 0 4px;"></div>
<div class="tx" style="left:-426.7px;width:1000px;text-align:center;top:676.0px;font-size:20.64px;color:#fff;"><span style="transform:scaleX(0.580);letter-spacing:0.116em;transform-origin:50% 50%;margin-right:-0.116em">MAIN</span></div>
<div class="tabd" style="left:143.0px;top:670.0px;width:134.0px;height:32.0px;"></div>
<div class="tx" style="left:-290.7px;width:1000px;text-align:center;top:676.0px;font-size:20.64px;color:#fff;"><span style="transform:scaleX(0.562);letter-spacing:0.098em;transform-origin:50% 50%;margin-right:-0.098em">FILE</span></div>
<div class="tabd" style="left:279.0px;top:670.0px;width:134.0px;height:32.0px;"></div>
<div class="tx" style="left:-154.7px;width:1000px;text-align:center;top:676.0px;font-size:20.64px;color:#fff;"><span style="transform:scaleX(0.528);letter-spacing:0.140em;transform-origin:50% 50%;margin-right:-0.140em">ATC</span></div>
<div class="tabd" style="left:415.0px;top:670.0px;width:134.0px;height:32.0px;"></div>
<div class="tx" style="left:-18.7px;width:1000px;text-align:center;top:676.0px;font-size:20.64px;color:#fff;"><span style="transform:scaleX(0.528);letter-spacing:0.126em;transform-origin:50% 50%;margin-right:-0.126em">TOOL</span></div>
<div class="tabd" style="left:551.0px;top:670.0px;width:134.0px;height:32.0px;"></div>
<div class="tx" style="left:117.3px;width:1000px;text-align:center;top:676.0px;font-size:20.64px;color:#fff;"><span style="transform:scaleX(0.528);letter-spacing:0.105em;transform-origin:50% 50%;margin-right:-0.105em">OFFSETS</span></div>
<div class="tabd" style="left:687.0px;top:670.0px;width:134.0px;height:32.0px;"></div>
<div class="tx" style="left:253.3px;width:1000px;text-align:center;top:676.0px;font-size:20.64px;color:#fff;"><span style="transform:scaleX(0.523);letter-spacing:0.106em;transform-origin:50% 50%;margin-right:-0.106em">PROBING</span></div>
<div class="tabb" style="left:823.0px;top:670.0px;width:134.0px;height:32.0px;"></div>
<div class="tx" style="left:389.3px;width:1000px;text-align:center;top:676.0px;font-size:20.64px;color:#fff;"><span style="transform:scaleX(0.536);letter-spacing:0.098em;transform-origin:50% 50%;margin-right:-0.098em">CONVERSATIONAL</span></div>
<div class="tabd" style="left:959.0px;top:670.0px;width:134.0px;height:32.0px;"></div>
<div class="tx" style="left:525.3px;width:1000px;text-align:center;top:676.0px;font-size:20.64px;color:#fff;"><span style="transform:scaleX(0.524);letter-spacing:0.097em;transform-origin:50% 50%;margin-right:-0.097em">SETTINGS</span></div>
<div class="tabd" style="left:1095.0px;top:670.0px;width:133.0px;height:32.0px;border-radius:0 4px 4px 0;"></div>
<div class="tx" style="left:661.3px;width:1000px;text-align:center;top:676.0px;font-size:20.64px;color:#fff;"><span style="transform:scaleX(0.528);letter-spacing:0.109em;transform-origin:50% 50%;margin-right:-0.109em">STATUS</span></div>
<div class="" style="left:1667.0px;top:667.5px;width:250.0px;height:36.0px;background:#080808;border-radius:5px"></div>
<div class="tabb" style="left:1669.0px;top:669.5px;width:79.0px;height:32.0px;border-radius:4px 0 0 4px;"></div>
<div class="tx" style="left:1207.8px;width:1000px;text-align:center;top:676.0px;font-size:20.64px;color:#fff;"><span style="transform:scaleX(0.483);letter-spacing:0.144em;transform-origin:50% 50%;margin-right:-0.144em">JOG</span></div>
<div class="tabd" style="left:1750.0px;top:669.5px;width:82.0px;height:32.0px;"></div>
<div class="tx" style="left:1290.3px;width:1000px;text-align:center;top:676.0px;font-size:20.64px;color:#fff;"><span style="transform:scaleX(0.528);letter-spacing:0.159em;transform-origin:50% 50%;margin-right:-0.159em">WCS</span></div>
<div class="tabd" style="left:1834.0px;top:669.5px;width:81.0px;height:32.0px;border-radius:0 4px 4px 0;"></div>
<div class="tx" style="left:1373.8px;width:1000px;text-align:center;top:676.0px;font-size:20.64px;color:#fff;"><span style="transform:scaleX(0.528);letter-spacing:0.121em;transform-origin:50% 50%;margin-right:-0.121em">PLOT</span></div>
<div class="panel" style="left:12.7px;top:716.7px;width:343.8px;height:338.8px;"></div>
<div class="panel" style="left:354.5px;top:716.7px;width:251.5px;height:338.8px;"></div>
<div class="panel" style="left:604.0px;top:716.7px;width:487.5px;height:338.8px;"></div>
<div class="panel" style="left:1089.5px;top:716.7px;width:439.0px;height:338.8px;"></div>
<div class="panel" style="left:1526.5px;top:716.7px;width:381.0px;height:338.8px;"></div>
<div class="btn" style="left:36.0px;top:730.7px;width:140.7px;height:50.3px;"></div>
<div class="tx" style="left:-394.3px;width:1000px;text-align:center;top:745.0px;font-size:23.69px;color:#fff;"><span style="transform:scaleX(0.497);letter-spacing:0.095em;transform-origin:50% 50%;margin-right:-0.095em">CYCLE START</span></div>
<div class="btn" style="left:192.3px;top:730.7px;width:139.4px;height:50.3px;"></div>
<div class="tx" style="left:-238.7px;width:1000px;text-align:center;top:745.0px;font-size:23.69px;color:#fff;"><span style="transform:scaleX(0.528);letter-spacing:0.124em;transform-origin:50% 50%;margin-right:-0.124em">STOP</span></div>
<div class="btn" style="left:36.0px;top:795.7px;width:129.7px;height:40.3px;"></div>
<div class="tx" style="left:-399.9px;width:1000px;text-align:center;top:806.0px;font-size:20.64px;color:#fff;"><span style="transform:scaleX(0.545);letter-spacing:0.090em;transform-origin:50% 50%;margin-right:-0.090em">RUN FROM LINE</span></div>
<div class="inp" style="left:202.7px;top:797.0px;width:128.3px;height:37.0px;"></div>
<div class="tx" style="left:-675.7px;width:1000px;text-align:right;top:805.0px;font-size:22.53px;color:#000;"><span style="transform:scaleX(0.750);letter-spacing:0.000em;transform-origin:100% 50%;margin-right:0.000em">0</span></div>
<div class="btn" style="left:36.0px;top:846.7px;width:129.7px;height:40.3px;"></div>
<div class="tx" style="left:-399.9px;width:1000px;text-align:center;top:857.0px;font-size:20.64px;color:#fff;"><span style="transform:scaleX(0.525);letter-spacing:0.094em;transform-origin:50% 50%;margin-right:-0.094em">SINGLE BLOCK</span></div>
<div class="btn" style="left:202.3px;top:846.7px;width:129.4px;height:40.3px;"></div>
<div class="tx" style="left:-233.7px;width:1000px;text-align:center;top:857.0px;font-size:20.64px;color:#fff;"><span style="transform:scaleX(0.528);letter-spacing:0.098em;transform-origin:50% 50%;margin-right:-0.098em">FEED HOLD</span></div>
<div class="btn" style="left:36.0px;top:897.7px;width:129.7px;height:40.6px;"></div>
<div class="tx" style="left:-399.9px;width:1000px;text-align:center;top:908.0px;font-size:20.64px;color:#fff;"><span style="transform:scaleX(0.528);letter-spacing:0.119em;transform-origin:50% 50%;margin-right:-0.119em">FLOOD</span></div>
<div class="btnb" style="left:202.3px;top:897.7px;width:129.4px;height:40.6px;"></div>
<div class="tx" style="left:-233.7px;width:1000px;text-align:center;top:908.0px;font-size:20.64px;color:#fff;"><span style="transform:scaleX(0.528);letter-spacing:0.096em;transform-origin:50% 50%;margin-right:-0.096em">BLOCK DELETE</span></div>
<div class="btn" style="left:36.0px;top:948.3px;width:129.7px;height:41.0px;"></div>
<div class="tx" style="left:-399.9px;width:1000px;text-align:center;top:959.0px;font-size:20.64px;color:#fff;"><span style="transform:scaleX(0.583);letter-spacing:0.109em;transform-origin:50% 50%;margin-right:-0.109em">MIST</span></div>
<div class="btnb" style="left:202.3px;top:948.3px;width:129.4px;height:41.0px;"></div>
<div class="tx" style="left:-233.7px;width:1000px;text-align:center;top:959.0px;font-size:20.64px;color:#fff;"><span style="transform:scaleX(0.564);letter-spacing:0.098em;transform-origin:50% 50%;margin-right:-0.098em">M01 BREAK</span></div>
<div class="" style="left:36.0px;top:999.0px;width:295.7px;height:2.0px;background:#b9bcb4"></div>
<div class="btn" style="left:36.0px;top:1010.7px;width:74.7px;height:33.3px;"></div>
<div class="tx" style="left:-427.4px;width:1000px;text-align:center;top:1017.0px;font-size:20.35px;color:#fff;"><span style="transform:scaleX(0.528);letter-spacing:0.129em;transform-origin:50% 50%;margin-right:-0.129em">POWER</span></div>
<div class="inp" style="left:139.3px;top:1012.0px;width:89.4px;height:29.7px;"></div>
<div class="tx" style="left:-316.7px;width:1000px;text-align:center;top:1016.0px;font-size:22.97px;color:#000;"><span style="transform:scaleX(0.682);letter-spacing:0.078em;transform-origin:50% 50%;margin-right:-0.078em">00:00:00</span></div>
<div class="btn" style="left:257.7px;top:1010.7px;width:74.0px;height:33.3px;border-color:#050505"></div>
<div class="tx" style="left:-206.0px;width:1000px;text-align:center;top:1017.0px;font-size:20.35px;color:#fff;"><span style="transform:scaleX(0.528);letter-spacing:0.102em;transform-origin:50% 50%;margin-right:-0.102em">E-STOP</span></div>
<div class="" style="left:376.0px;top:732.0px;width:99.7px;height:37.0px;background:#565656;border:1px solid #9a9a98;border-radius:5px"></div>
<div class="tx" style="left:-104.0px;width:1000px;text-align:center;top:740.0px;font-size:23.40px;color:#fff;"><span style="transform:scaleX(0.600);letter-spacing:0.000em;transform-origin:50% 50%;margin-right:0.000em">T</span></div>
<div class="inp" style="left:410.0px;top:736.0px;width:53.0px;height:30.0px;"></div>
<div class="tx" style="left:-66.2px;width:1000px;text-align:center;top:741.0px;font-size:22.53px;color:#000;"><span style="transform:scaleX(0.750);letter-spacing:0.000em;transform-origin:50% 50%;margin-right:0.000em">0</span></div>
<div class="btn" style="left:485.0px;top:732.0px;width:99.0px;height:38.0px;"></div>
<div class="tx" style="left:33.8px;width:1000px;text-align:center;top:741.0px;font-size:21.95px;color:#fff;"><span style="transform:scaleX(0.579);letter-spacing:0.097em;transform-origin:50% 50%;margin-right:-0.097em">M6 G43</span></div>
<div class="btn" style="left:376.0px;top:785.3px;width:99.7px;height:38.7px;"></div>
<div class="tx" style="left:-74.8px;width:1000px;text-align:center;top:794.0px;font-size:21.95px;color:#fff;"><span style="transform:scaleX(0.555);letter-spacing:0.129em;transform-origin:50% 50%;margin-right:-0.129em">G43</span></div>
<div class="btnb" style="left:485.0px;top:785.3px;width:99.0px;height:38.7px;"></div>
<div class="tx" style="left:33.8px;width:1000px;text-align:center;top:794.0px;font-size:21.95px;color:#fff;"><span style="transform:scaleX(0.555);letter-spacing:0.129em;transform-origin:50% 50%;margin-right:-0.129em">G49</span></div>
<div class="tx" style="left:-94.9px;width:1000px;text-align:center;top:845.0px;font-size:21.66px;color:#fff;"><span style="transform:scaleX(0.505);letter-spacing:0.112em;transform-origin:50% 50%;margin-right:-0.112em">LENGTH</span></div>
<div class="inpg" style="left:441.7px;top:839.0px;width:121.0px;height:32.7px;"></div>
<div class="tx" style="left:-443.5px;width:1000px;text-align:right;top:845.0px;font-size:23.26px;color:#000;"><span style="transform:scaleX(0.654);letter-spacing:0.083em;transform-origin:100% 50%;margin-right:-0.083em">0.0000</span></div>
<div class="tx" style="left:568.5px;top:845.0px;font-size:23.26px;color:#fff;"><span style="transform:scaleX(0.601);letter-spacing:0.136em;transform-origin:0 50%">IN</span></div>
<div class="tx" style="left:-94.9px;width:1000px;text-align:center;top:892.0px;font-size:21.66px;color:#fff;"><span style="transform:scaleX(0.580);letter-spacing:0.116em;transform-origin:50% 50%;margin-right:-0.116em">DIAM</span></div>
<div class="inpg" style="left:441.7px;top:886.7px;width:121.0px;height:31.6px;"></div>
<div class="tx" style="left:-443.5px;width:1000px;text-align:right;top:892.0px;font-size:23.26px;color:#000;"><span style="transform:scaleX(0.654);letter-spacing:0.083em;transform-origin:100% 50%;margin-right:-0.083em">0.0000</span></div>
<div class="tx" style="left:568.5px;top:892.0px;font-size:23.26px;color:#fff;"><span style="transform:scaleX(0.601);letter-spacing:0.136em;transform-origin:0 50%">IN</span></div>
<div class="btn" style="left:376.0px;top:933.3px;width:99.7px;height:39.4px;"></div>
<div class="tx" style="left:-74.8px;width:1000px;text-align:center;top:944.0px;font-size:19.77px;color:#fff;"><span style="transform:scaleX(0.513);letter-spacing:0.095em;transform-origin:50% 50%;margin-right:-0.095em">GO TO ZERO</span></div>
<div class="btn" style="left:485.0px;top:933.3px;width:99.0px;height:39.4px;"></div>
<div class="tx" style="left:33.8px;width:1000px;text-align:center;top:944.0px;font-size:19.77px;color:#fff;"><span style="transform:scaleX(0.520);letter-spacing:0.092em;transform-origin:50% 50%;margin-right:-0.092em">GO TO G30</span></div>
<div class="" style="left:376.0px;top:987.0px;width:208.0px;height:2.0px;background:#b9bcb4"></div>
<div class="btn" style="left:376.0px;top:1003.3px;width:208.0px;height:39.0px;"></div>
<div class="tx" style="left:-20.7px;width:1000px;text-align:center;top:1014.0px;font-size:19.77px;color:#fff;"><span style="transform:scaleX(0.522);letter-spacing:0.099em;transform-origin:50% 50%;margin-right:-0.099em">GO TO HOME</span></div>
<div class="btn" style="left:623.4px;top:732.5px;width:59.4px;height:38.5px;"></div>
<div class="tx" style="left:-350.7px;width:1000px;text-align:right;top:745.0px;font-size:13.08px;color:#fff;"><span style="transform:scaleX(0.528);letter-spacing:0.126em;transform-origin:100% 50%;margin-right:-0.126em">ZERO</span></div>
<div class="tx" style="left:651.6px;top:742.0px;font-size:20.64px;color:#fff;"><span style="transform:scaleX(0.528);letter-spacing:0.133em;transform-origin:0 50%">ALL</span></div>
<div class="" style="left:690.4px;top:732.5px;width:313.2px;height:38.5px;background:#5b5b5b;border:1px solid #a8a8a8;border-radius:5px"></div>
<div class="tx" style="left:247.1px;width:1000px;text-align:center;top:741.0px;font-size:21.08px;color:#f0f0f0;"><span style="transform:scaleX(0.538);letter-spacing:0.104em;transform-origin:50% 50%;margin-right:-0.104em">G54 WORK</span></div>
<div class="tx" style="left:348.3px;width:1000px;text-align:center;top:741.0px;font-size:21.08px;color:#f0f0f0;"><span style="transform:scaleX(0.556);letter-spacing:0.106em;transform-origin:50% 50%;margin-right:-0.106em">MACHINE</span></div>
<div class="tx" style="left:451.2px;width:1000px;text-align:center;top:741.0px;font-size:21.08px;color:#f0f0f0;"><span style="transform:scaleX(0.483);letter-spacing:0.144em;transform-origin:50% 50%;margin-right:-0.144em">DTG</span></div>
<div class="btn" style="left:1011.5px;top:732.5px;width:61.2px;height:38.5px;"></div>
<div class="tx" style="left:541.4px;width:1000px;text-align:center;top:742.0px;font-size:20.20px;color:#fff;"><span style="transform:scaleX(0.528);letter-spacing:0.096em;transform-origin:50% 50%;margin-right:-0.096em">REF ALL</span></div>
<div class="btn" style="left:623.4px;top:786.7px;width:59.4px;height:38.5px;"></div>
<div class="tx" style="left:-345.7px;width:1000px;text-align:right;top:799.0px;font-size:13.08px;color:#fff;"><span style="transform:scaleX(0.528);letter-spacing:0.126em;transform-origin:100% 50%;margin-right:-0.126em">ZERO</span></div>
<div class="tx" style="left:656.6px;top:795.0px;font-size:22.97px;color:#fff;"><span style="transform:scaleX(0.600);letter-spacing:0.000em;transform-origin:0 50%">X</span></div>
<div class="inpg" style="left:690.4px;top:788.7px;width:98.9px;height:33.5px;"></div>
<div class="tx" style="left:-218.4px;width:1000px;text-align:right;top:795.0px;font-size:22.67px;color:#000;"><span style="transform:scaleX(0.654);letter-spacing:0.083em;transform-origin:100% 50%;margin-right:-0.083em">0.0000</span></div>
<div class="inpg" style="left:797.4px;top:788.7px;width:99.0px;height:33.5px;"></div>
<div class="tx" style="left:-111.3px;width:1000px;text-align:right;top:795.0px;font-size:22.67px;color:#000;"><span style="transform:scaleX(0.654);letter-spacing:0.083em;transform-origin:100% 50%;margin-right:-0.083em">0.0000</span></div>
<div class="inpg" style="left:904.4px;top:788.7px;width:99.0px;height:33.5px;"></div>
<div class="tx" style="left:-4.3px;width:1000px;text-align:right;top:795.0px;font-size:22.67px;color:#000;"><span style="transform:scaleX(0.654);letter-spacing:0.083em;transform-origin:100% 50%;margin-right:-0.083em">0.0000</span></div>
<div class="btn" style="left:1011.5px;top:786.7px;width:61.2px;height:38.5px;"></div>
<div class="tx" style="left:541.4px;width:1000px;text-align:center;top:796.0px;font-size:20.20px;color:#fff;"><span style="transform:scaleX(0.528);letter-spacing:0.100em;transform-origin:50% 50%;margin-right:-0.100em">REF X</span></div>
<div class="btn" style="left:623.4px;top:840.6px;width:59.4px;height:38.5px;"></div>
<div class="tx" style="left:-345.7px;width:1000px;text-align:right;top:853.0px;font-size:13.08px;color:#fff;"><span style="transform:scaleX(0.528);letter-spacing:0.126em;transform-origin:100% 50%;margin-right:-0.126em">ZERO</span></div>
<div class="tx" style="left:656.6px;top:849.0px;font-size:22.97px;color:#fff;"><span style="transform:scaleX(0.600);letter-spacing:0.000em;transform-origin:0 50%">Y</span></div>
<div class="inpg" style="left:690.4px;top:842.6px;width:98.9px;height:33.5px;"></div>
<div class="tx" style="left:-218.4px;width:1000px;text-align:right;top:849.0px;font-size:22.67px;color:#000;"><span style="transform:scaleX(0.654);letter-spacing:0.083em;transform-origin:100% 50%;margin-right:-0.083em">0.0000</span></div>
<div class="inpg" style="left:797.4px;top:842.6px;width:99.0px;height:33.5px;"></div>
<div class="tx" style="left:-111.3px;width:1000px;text-align:right;top:849.0px;font-size:22.67px;color:#000;"><span style="transform:scaleX(0.654);letter-spacing:0.083em;transform-origin:100% 50%;margin-right:-0.083em">0.0000</span></div>
<div class="inpg" style="left:904.4px;top:842.6px;width:99.0px;height:33.5px;"></div>
<div class="tx" style="left:-4.3px;width:1000px;text-align:right;top:849.0px;font-size:22.67px;color:#000;"><span style="transform:scaleX(0.654);letter-spacing:0.083em;transform-origin:100% 50%;margin-right:-0.083em">0.0000</span></div>
<div class="btn" style="left:1011.5px;top:840.6px;width:61.2px;height:38.5px;"></div>
<div class="tx" style="left:541.4px;width:1000px;text-align:center;top:850.0px;font-size:20.20px;color:#fff;"><span style="transform:scaleX(0.528);letter-spacing:0.100em;transform-origin:50% 50%;margin-right:-0.100em">REF Y</span></div>
<div class="btn" style="left:623.4px;top:894.3px;width:59.4px;height:38.5px;"></div>
<div class="tx" style="left:-345.7px;width:1000px;text-align:right;top:907.0px;font-size:13.08px;color:#fff;"><span style="transform:scaleX(0.528);letter-spacing:0.126em;transform-origin:100% 50%;margin-right:-0.126em">ZERO</span></div>
<div class="tx" style="left:656.6px;top:902.0px;font-size:22.97px;color:#fff;"><span style="transform:scaleX(0.600);letter-spacing:0.000em;transform-origin:0 50%">Z</span></div>
<div class="inpg" style="left:690.4px;top:896.3px;width:98.9px;height:33.5px;"></div>
<div class="tx" style="left:-218.4px;width:1000px;text-align:right;top:902.0px;font-size:22.67px;color:#000;"><span style="transform:scaleX(0.654);letter-spacing:0.083em;transform-origin:100% 50%;margin-right:-0.083em">0.0000</span></div>
<div class="inpg" style="left:797.4px;top:896.3px;width:99.0px;height:33.5px;"></div>
<div class="tx" style="left:-111.3px;width:1000px;text-align:right;top:902.0px;font-size:22.67px;color:#000;"><span style="transform:scaleX(0.654);letter-spacing:0.083em;transform-origin:100% 50%;margin-right:-0.083em">0.0000</span></div>
<div class="inpg" style="left:904.4px;top:896.3px;width:99.0px;height:33.5px;"></div>
<div class="tx" style="left:-4.3px;width:1000px;text-align:right;top:902.0px;font-size:22.67px;color:#000;"><span style="transform:scaleX(0.654);letter-spacing:0.083em;transform-origin:100% 50%;margin-right:-0.083em">0.0000</span></div>
<div class="btn" style="left:1011.5px;top:894.3px;width:61.2px;height:38.5px;"></div>
<div class="tx" style="left:541.4px;width:1000px;text-align:center;top:904.0px;font-size:20.20px;color:#fff;"><span style="transform:scaleX(0.528);letter-spacing:0.098em;transform-origin:50% 50%;margin-right:-0.098em">REF Z</span></div>
<div class="btn" style="left:623.4px;top:947.0px;width:59.4px;height:38.5px;"></div>
<div class="tx" style="left:-345.7px;width:1000px;text-align:right;top:960.0px;font-size:13.08px;color:#fff;"><span style="transform:scaleX(0.528);letter-spacing:0.126em;transform-origin:100% 50%;margin-right:-0.126em">ZERO</span></div>
<div class="tx" style="left:656.6px;top:955.0px;font-size:22.97px;color:#fff;"><span style="transform:scaleX(0.600);letter-spacing:0.000em;transform-origin:0 50%">A</span></div>
<div class="inpg" style="left:690.4px;top:949.0px;width:98.9px;height:33.5px;"></div>
<div class="tx" style="left:-218.4px;width:1000px;text-align:right;top:955.0px;font-size:22.67px;color:#000;"><span style="transform:scaleX(0.651);letter-spacing:0.088em;transform-origin:100% 50%;margin-right:-0.088em">0.00</span></div>
<div class="inpg" style="left:797.4px;top:949.0px;width:99.0px;height:33.5px;"></div>
<div class="tx" style="left:-111.3px;width:1000px;text-align:right;top:955.0px;font-size:22.67px;color:#000;"><span style="transform:scaleX(0.651);letter-spacing:0.088em;transform-origin:100% 50%;margin-right:-0.088em">0.00</span></div>
<div class="inpg" style="left:904.4px;top:949.0px;width:99.0px;height:33.5px;"></div>
<div class="tx" style="left:-4.3px;width:1000px;text-align:right;top:955.0px;font-size:22.67px;color:#000;"><span style="transform:scaleX(0.651);letter-spacing:0.088em;transform-origin:100% 50%;margin-right:-0.088em">0.00</span></div>
<div class="btn" style="left:1011.5px;top:947.0px;width:61.2px;height:38.5px;"></div>
<div class="tx" style="left:541.4px;width:1000px;text-align:center;top:956.0px;font-size:20.20px;color:#fff;"><span style="transform:scaleX(0.528);letter-spacing:0.102em;transform-origin:50% 50%;margin-right:-0.102em">REF A</span></div>
<div class="btn" style="left:623.4px;top:1001.0px;width:59.4px;height:38.5px;"></div>
<div class="tx" style="left:-345.7px;width:1000px;text-align:right;top:1014.0px;font-size:13.08px;color:#fff;"><span style="transform:scaleX(0.528);letter-spacing:0.126em;transform-origin:100% 50%;margin-right:-0.126em">ZERO</span></div>
<div class="tx" style="left:656.6px;top:1009.0px;font-size:22.97px;color:#fff;"><span style="transform:scaleX(0.600);letter-spacing:0.000em;transform-origin:0 50%">B</span></div>
<div class="inpg" style="left:690.4px;top:1003.0px;width:98.9px;height:33.5px;"></div>
<div class="tx" style="left:-218.4px;width:1000px;text-align:right;top:1009.0px;font-size:22.67px;color:#000;"><span style="transform:scaleX(0.651);letter-spacing:0.088em;transform-origin:100% 50%;margin-right:-0.088em">0.00</span></div>
<div class="inpg" style="left:797.4px;top:1003.0px;width:99.0px;height:33.5px;"></div>
<div class="tx" style="left:-111.3px;width:1000px;text-align:right;top:1009.0px;font-size:22.67px;color:#000;"><span style="transform:scaleX(0.651);letter-spacing:0.088em;transform-origin:100% 50%;margin-right:-0.088em">0.00</span></div>
<div class="inpg" style="left:904.4px;top:1003.0px;width:99.0px;height:33.5px;"></div>
<div class="tx" style="left:-4.3px;width:1000px;text-align:right;top:1009.0px;font-size:22.67px;color:#000;"><span style="transform:scaleX(0.651);letter-spacing:0.088em;transform-origin:100% 50%;margin-right:-0.088em">0.00</span></div>
<div class="btn" style="left:1011.5px;top:1001.0px;width:61.2px;height:38.5px;"></div>
<div class="tx" style="left:541.4px;width:1000px;text-align:center;top:1010.0px;font-size:20.20px;color:#fff;"><span style="transform:scaleX(0.528);letter-spacing:0.102em;transform-origin:50% 50%;margin-right:-0.102em">REF B</span></div>
<div class="" style="left:1113.0px;top:739.0px;width:317.7px;height:29.7px;border:1px solid #c6c8c4;border-radius:3px"></div>
<div class="tx" style="left:772.3px;width:1000px;text-align:center;top:745.0px;font-size:19.62px;color:#fff;"><span style="transform:scaleX(0.571);letter-spacing:0.117em;transform-origin:50% 50%;margin-right:-0.117em">0 %</span></div>
<div class="" style="left:1441.0px;top:734.5px;width:64.7px;height:38.9px;background:#555657;border:1px solid #9a9c9a;border-radius:5px"></div>
<div class="tx" style="left:972.3px;width:1000px;text-align:center;top:736.0px;font-size:17.30px;color:#fff;"><span style="transform:scaleX(0.545);letter-spacing:0.098em;transform-origin:50% 50%;margin-right:-0.098em">SPINDLE</span></div>
<div class="tx" style="left:972.3px;width:1000px;text-align:center;top:756.0px;font-size:17.30px;color:#fff;"><span style="transform:scaleX(0.528);letter-spacing:0.129em;transform-origin:50% 50%;margin-right:-0.129em">LOAD</span></div>
<div class="" style="left:1113.0px;top:806.0px;width:252.5px;height:22.0px;border-radius:3px;background:linear-gradient(90deg,#b5b5b5 0px,#bbbbbb 210px,#ededed 210px,#ededed 100%)"></div>
<div class="" style="left:1323.0px;top:794.5px;width:41.6px;height:45.0px;background:#eeeeee;border-radius:5px;border:1px solid #d8d8d8"></div>
<div class="inpg" style="left:1376.8px;top:799.7px;width:53.4px;height:34.6px;"></div>
<div class="tx" style="left:902.8px;width:1000px;text-align:center;top:809.0px;font-size:18.75px;color:#000;"><span style="transform:scaleX(0.660);letter-spacing:0.114em;transform-origin:50% 50%;margin-right:-0.114em">600</span></div>
<div class="btn" style="left:1441.0px;top:797.3px;width:64.7px;height:39.4px;"></div>
<div class="tx" style="left:972.6px;width:1000px;text-align:center;top:808.0px;font-size:19.62px;color:#fff;"><span style="transform:scaleX(0.591);letter-spacing:0.096em;transform-origin:50% 50%;margin-right:-0.096em">V 100%</span></div>
<div class="" style="left:1113.0px;top:874.0px;width:252.5px;height:22.0px;border-radius:3px;background:linear-gradient(90deg,#b5b5b5 0px,#bbbbbb 106.29999999999995px,#ededed 106.29999999999995px,#ededed 100%)"></div>
<div class="" style="left:1219.3px;top:862.5px;width:41.6px;height:45.0px;background:#eeeeee;border-radius:5px;border:1px solid #d8d8d8"></div>
<div class="inpg" style="left:1376.8px;top:867.7px;width:53.4px;height:34.6px;"></div>
<div class="tx" style="left:902.8px;width:1000px;text-align:center;top:877.0px;font-size:18.75px;color:#000;"><span style="transform:scaleX(0.614);letter-spacing:0.116em;transform-origin:50% 50%;margin-right:-0.116em">100%</span></div>
<div class="btn" style="left:1441.0px;top:865.3px;width:64.7px;height:39.4px;"></div>
<div class="tx" style="left:972.6px;width:1000px;text-align:center;top:876.0px;font-size:19.62px;color:#fff;"><span style="transform:scaleX(0.592);letter-spacing:0.094em;transform-origin:50% 50%;margin-right:-0.094em">F 100%</span></div>
<div class="" style="left:1113.0px;top:942.0px;width:252.5px;height:22.0px;border-radius:3px;background:linear-gradient(90deg,#b5b5b5 0px,#bbbbbb 71px,#ededed 71px,#ededed 100%)"></div>
<div class="" style="left:1184.0px;top:930.5px;width:41.6px;height:45.0px;background:#eeeeee;border-radius:5px;border:1px solid #d8d8d8"></div>
<div class="inpg" style="left:1376.8px;top:935.7px;width:53.4px;height:34.6px;"></div>
<div class="tx" style="left:902.8px;width:1000px;text-align:center;top:945.0px;font-size:18.75px;color:#000;"><span style="transform:scaleX(0.614);letter-spacing:0.116em;transform-origin:50% 50%;margin-right:-0.116em">100%</span></div>
<div class="btn" style="left:1441.0px;top:933.3px;width:64.7px;height:39.4px;"></div>
<div class="tx" style="left:972.6px;width:1000px;text-align:center;top:944.0px;font-size:19.62px;color:#fff;"><span style="transform:scaleX(0.591);letter-spacing:0.096em;transform-origin:50% 50%;margin-right:-0.096em">S 100%</span></div>
<div class="" style="left:1113.0px;top:1010.0px;width:252.5px;height:22.0px;border-radius:3px;background:linear-gradient(90deg,#b5b5b5 0px,#bbbbbb 210px,#ededed 210px,#ededed 100%)"></div>
<div class="" style="left:1323.0px;top:998.5px;width:41.6px;height:45.0px;background:#eeeeee;border-radius:5px;border:1px solid #d8d8d8"></div>
<div class="inpg" style="left:1376.8px;top:1003.7px;width:53.4px;height:34.6px;"></div>
<div class="tx" style="left:902.8px;width:1000px;text-align:center;top:1013.0px;font-size:18.75px;color:#000;"><span style="transform:scaleX(0.614);letter-spacing:0.116em;transform-origin:50% 50%;margin-right:-0.116em">100%</span></div>
<div class="btn" style="left:1441.0px;top:1001.3px;width:64.7px;height:39.4px;"></div>
<div class="tx" style="left:972.6px;width:1000px;text-align:center;top:1012.0px;font-size:19.62px;color:#fff;"><span style="transform:scaleX(0.590);letter-spacing:0.097em;transform-origin:50% 50%;margin-right:-0.097em">R 100%</span></div>
<div class="btnb" style="left:1548.8px;top:735.0px;width:61.2px;height:40.0px;border-color:#050505"></div>
<div class="tx" style="left:1078.7px;width:1000px;text-align:center;top:745.0px;font-size:20.64px;color:#fff;"><span style="transform:scaleX(0.483);letter-spacing:0.144em;transform-origin:50% 50%;margin-right:-0.144em">JOG</span></div>
<div class="btn" style="left:1618.0px;top:735.0px;width:61.0px;height:40.0px;border-color:#050505"></div>
<div class="tx" style="left:1147.8px;width:1000px;text-align:center;top:745.0px;font-size:20.64px;color:#fff;"><span style="transform:scaleX(0.619);letter-spacing:0.083em;transform-origin:50% 50%;margin-right:-0.083em">.1IN</span></div>
<div class="btn" style="left:1687.0px;top:735.0px;width:61.0px;height:40.0px;border-color:#050505"></div>
<div class="tx" style="left:1216.8px;width:1000px;text-align:center;top:745.0px;font-size:20.64px;color:#fff;"><span style="transform:scaleX(0.628);letter-spacing:0.081em;transform-origin:50% 50%;margin-right:-0.081em">.01IN</span></div>
<div class="btn" style="left:1756.0px;top:735.0px;width:61.0px;height:40.0px;border-color:#050505"></div>
<div class="tx" style="left:1285.8px;width:1000px;text-align:center;top:745.0px;font-size:20.64px;color:#fff;"><span style="transform:scaleX(0.634);letter-spacing:0.080em;transform-origin:50% 50%;margin-right:-0.080em">.001IN</span></div>
<div class="btn" style="left:1824.8px;top:735.0px;width:61.2px;height:40.0px;border-color:#050505"></div>
<div class="tx" style="left:1354.7px;width:1000px;text-align:center;top:745.0px;font-size:20.64px;color:#fff;"><span style="transform:scaleX(0.638);letter-spacing:0.080em;transform-origin:50% 50%;margin-right:-0.080em">.0001IN</span></div>
<div class="" style="left:1548.8px;top:808.0px;width:274.2px;height:21.6px;border-radius:3px;background:linear-gradient(90deg,#b4b4fa 0%,#8c8cf6 40%,#5e5ef2 100%)"></div>
<div class="" style="left:1782.0px;top:797.0px;width:40.0px;height:44.0px;border-radius:5px;background:repeating-linear-gradient(90deg,#3a3a3a 0px,#3a3a3a 7px,#d0d0d0 8px,#3a3a3a 9.5px);border:1px solid #555"></div>
<div class="inpg" style="left:1839.4px;top:800.6px;width:47.3px;height:36.9px;"></div>
<div class="tx" style="left:1362.3px;width:1000px;text-align:center;top:810.0px;font-size:18.75px;color:#000;"><span style="transform:scaleX(0.614);letter-spacing:0.116em;transform-origin:50% 50%;margin-right:-0.116em">100%</span></div>
<div class="" style="left:1548.5px;top:862.5px;width:104.2px;height:37.1px;background:#565656;border-radius:5px;border:1px solid #5e5e5e"></div>
<div class="tx" style="left:645.8px;width:1000px;text-align:right;top:871.0px;font-size:22.24px;color:#eee;"><span style="transform:scaleX(0.648);letter-spacing:0.095em;transform-origin:100% 50%;margin-right:-0.095em">0.0</span></div>
<div class="tx" style="left:1659.6px;top:871.0px;font-size:22.24px;color:#fff;"><span style="transform:scaleX(0.585);letter-spacing:0.088em;transform-origin:0 50%">FEEDRATE IN/M</span></div>
<div class="inpg" style="left:1783.0px;top:862.5px;width:103.7px;height:37.1px;"></div>
<div class="tx" style="left:880.3px;width:1000px;text-align:right;top:871.0px;font-size:22.24px;color:#000;"><span style="transform:scaleX(0.651);letter-spacing:0.088em;transform-origin:100% 50%;margin-right:-0.088em">10.0</span></div>
<div class="" style="left:1548.5px;top:918.0px;width:338.5px;height:2.0px;background:#b9bcb4"></div>
<div class="" style="left:1548.5px;top:938.5px;width:104.2px;height:37.1px;background:#565656;border-radius:5px;border:1px solid #5e5e5e"></div>
<div class="tx" style="left:645.8px;width:1000px;text-align:right;top:947.0px;font-size:22.24px;color:#eee;"><span style="transform:scaleX(0.750);letter-spacing:0.000em;transform-origin:100% 50%;margin-right:0.000em">0</span></div>
<div class="tx" style="left:1216.3px;width:1000px;text-align:center;top:947.0px;font-size:22.24px;color:#fff;"><span style="transform:scaleX(0.554);letter-spacing:0.093em;transform-origin:50% 50%;margin-right:-0.093em">SPINDLE RPM</span></div>
<div class="inpg" style="left:1783.0px;top:938.5px;width:103.7px;height:37.1px;"></div>
<div class="tx" style="left:880.3px;width:1000px;text-align:right;top:947.0px;font-size:22.24px;color:#000;"><span style="transform:scaleX(0.660);letter-spacing:0.114em;transform-origin:100% 50%;margin-right:-0.114em">300</span></div>
<div class="btn" style="left:1548.5px;top:999.6px;width:99.2px;height:40.8px;"></div>
<div class="tx" style="left:1106.3px;width:1000px;text-align:center;top:1009.0px;font-size:22.97px;color:#fff;"><span style="transform:scaleX(0.528);letter-spacing:0.140em;transform-origin:50% 50%;margin-right:-0.140em">REV</span></div>
<svg style="position:absolute;left:1572px;top:1011px" width="18" height="18"><path d="M4.5,5 A6.5,6.5 0 1 1 3,11" fill="none" stroke="#fff" stroke-width="2.2"/><path d="M1.5,2 L7.5,2.5 L4,7.5 z" fill="#fff"/></svg>
<div class="btn" style="left:1668.3px;top:999.6px;width:99.2px;height:40.8px;"></div>
<div class="tx" style="left:1217.2px;width:1000px;text-align:center;top:1009.0px;font-size:22.97px;color:#fff;"><span style="transform:scaleX(0.528);letter-spacing:0.124em;transform-origin:50% 50%;margin-right:-0.124em">STOP</span></div>
<div class="btn" style="left:1788.3px;top:999.6px;width:99.4px;height:40.8px;"></div>
<div class="tx" style="left:1328.3px;width:1000px;text-align:center;top:1009.0px;font-size:22.97px;color:#fff;"><span style="transform:scaleX(0.528);letter-spacing:0.155em;transform-origin:50% 50%;margin-right:-0.155em">FWD</span></div>
<svg style="position:absolute;left:1848px;top:1011px" width="18" height="18"><path d="M13.5,5 A6.5,6.5 0 1 0 15,11" fill="none" stroke="#fff" stroke-width="2.2"/><path d="M16.5,2 L10.5,2.5 L14,7.5 z" fill="#fff"/></svg></body></html>
